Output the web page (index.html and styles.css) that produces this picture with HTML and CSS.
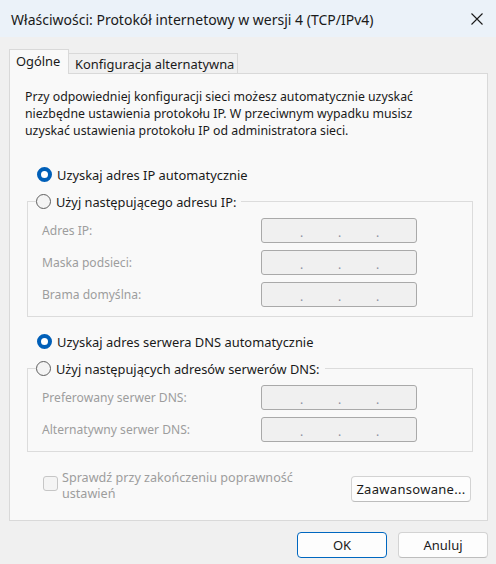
FILE: index.html
```html
<!DOCTYPE html>
<html lang="pl">
<head>
<meta charset="utf-8">
<title>Właściwości: Protokół internetowy w wersji 4 (TCP/IPv4)</title>
<link rel="stylesheet" href="styles.css">
</head>
<body>
<div class="window">
  <div class="titlebar">
    <span class="title">Właściwości: Protokół internetowy w wersji 4 (TCP/IPv4)</span>
    <svg class="close" width="12" height="12" viewBox="0 0 12 12"><path d="M0.5 0.5L11.5 11.5M11.5 0.5L0.5 11.5" stroke="#1a1a1a" stroke-width="1.1" fill="none"/></svg>
  </div>
  <div class="content">
    <div class="tabs">
      <div class="tab active">Ogólne</div>
      <div class="tab">Konfiguracja alternatywna</div>
    </div>
    <div class="panel">
      <p class="intro">Przy odpowiedniej konfiguracji sieci możesz automatycznie uzyskać<br>niezbędne ustawienia protokołu IP. W przeciwnym wypadku musisz<br>uzyskać ustawienia protokołu IP od administratora sieci.</p>

      <div class="radio-row first"><span class="radio checked"></span><span>Uzyskaj adres IP automatycznie</span></div>
      <fieldset class="group">
        <legend><span class="radio"></span><span>Użyj następującego adresu IP:</span></legend>
        <div class="field"><span class="flabel">Adres IP:</span><div class="ip"><span></span><i>.</i><span></span><i>.</i><span></span><i>.</i><span></span></div></div>
        <div class="field"><span class="flabel">Maska podsieci:</span><div class="ip"><span></span><i>.</i><span></span><i>.</i><span></span><i>.</i><span></span></div></div>
        <div class="field"><span class="flabel">Brama domyślna:</span><div class="ip"><span></span><i>.</i><span></span><i>.</i><span></span><i>.</i><span></span></div></div>
      </fieldset>

      <div class="radio-row second"><span class="radio checked"></span><span>Uzyskaj adres serwera DNS automatycznie</span></div>
      <fieldset class="group">
        <legend><span class="radio"></span><span>Użyj następujących adresów serwerów DNS:</span></legend>
        <div class="field"><span class="flabel">Preferowany serwer DNS:</span><div class="ip"><span></span><i>.</i><span></span><i>.</i><span></span><i>.</i><span></span></div></div>
        <div class="field"><span class="flabel">Alternatywny serwer DNS:</span><div class="ip"><span></span><i>.</i><span></span><i>.</i><span></span><i>.</i><span></span></div></div>
      </fieldset>

      <div class="bottom-row">
        <div class="check"><span class="box"></span><span class="check-label">Sprawdź przy zakończeniu poprawność<br>ustawień</span></div>
        <button class="btn adv">Zaawansowane...</button>
      </div>
    </div>
    <div class="footer">
      <button class="btn primary">OK</button>
      <button class="btn">Anuluj</button>
    </div>
  </div>
</div>
</body>
</html>
```
FILE: styles.css
```css
html, body {
  margin: 0;
  padding: 0;
}
body {
  font-family: "Noto Sans", "Open Sans", sans-serif;
  font-size: 12px;
  color: #1a1a1a;
  background: #f0f0f0;
}
.window {
  width: 496px;
  height: 564px;
  background: #f0f0f0;
  display: flex;
  flex-direction: column;
  overflow: hidden;
}
.titlebar {
  height: 37px;
  flex: none;
  background: #ebf2f9;
  display: flex;
  align-items: center;
  justify-content: space-between;
  padding: 0 13px 0 11px;
  box-sizing: border-box;
}
.title {
  font-size: 14px;
  line-height: 18px;
  padding-top: 2px;
}
.close {
  display: block;
}
.content {
  padding: 12px 8px 0 9px;
  display: flex;
  flex-direction: column;
}
.tabs {
  display: flex;
  align-items: flex-end;
  height: 24px;
  font-size: 12.9px;
}
.tab {
  height: 20px;
  line-height: 20px;
  padding: 0 6px 0 6px;
  border: 1px solid #d9d9d9;
  border-bottom: none;
  border-left: none;
  background: #f0f0f0;
  box-sizing: border-box;
  width: 169px;
  white-space: nowrap;
}
.tab.active {
  position: relative;
  z-index: 1;
  width: 60px;
  line-height: 22px;
  border-left: 1px solid #d9d9d9;
  background: #f9f9f9;
  margin-bottom: -1px;
  height: 25px;
}
.panel {
  height: 448px;
  box-sizing: border-box;
  border: 1px solid #d9d9d9;
  background: #f9f9f9;
  display: flex;
  flex-direction: column;
}
.intro {
  margin: 14px 0 0 15px;
  line-height: 17px;
  font-size: 12.3px;
  white-space: nowrap;
}
.radio-row {
  display: flex;
  align-items: center;
  height: 17px;
  margin-left: 27px;
  font-size: 12.9px;
}
.radio-row.first {
  margin-top: 27px;
}
.radio-row.second {
  margin-top: 16px;
}
.radio {
  width: 15px;
  height: 15px;
  box-sizing: border-box;
  border-radius: 50%;
  border: 1px solid #5f5f5f;
  background: #f4f4f4;
  margin-right: 5px;
  flex: none;
}
.radio.checked {
  border: 4.5px solid #005fb8;
  background: #ffffff;
}
.group {
  margin: 10px 14px 0 17px;
  padding: 8px 0 9px 14px;
  border: 1px solid #dcdcdc;
  display: flex;
  flex-direction: column;
  gap: 7px;
}
.group legend {
  display: flex;
  align-items: center;
  height: 17px;
  margin-left: -6px;
  padding: 0 5px 0 0;
  font-size: 12.8px;
  white-space: nowrap;
}
.field {
  display: flex;
  align-items: center;
  height: 25px;
}
.flabel {
  width: 219px;
  color: #9d9d9d;
  font-size: 12.1px;
}
.ip {
  width: 156px;
  height: 25px;
  box-sizing: border-box;
  border: 1px solid #a9a9a9;
  border-radius: 3px;
  background: #f0f0f0;
  display: flex;
  padding: 0 2px 0 3px;
  line-height: 27px;
  color: #8a8fa0;
}
.ip span {
  flex: 1;
}
.ip i {
  font-style: normal;
  width: 3px;
  text-align: center;
}
.bottom-row {
  display: flex;
  justify-content: space-between;
  align-items: flex-start;
  margin: 18px 16px 0 33px;
}
.check {
  display: flex;
  align-items: flex-start;
}
.box {
  width: 15px;
  height: 15px;
  box-sizing: border-box;
  border: 1px solid #c6c6c6;
  border-radius: 3px;
  background: #f4f4f4;
  margin: 6px 4px 0 0;
  flex: none;
}
.check-label {
  color: #9d9d9d;
  line-height: 16px;
  font-size: 12.6px;
  white-space: nowrap;
}
.btn {
  font-family: "Noto Sans", "Open Sans", sans-serif;
  font-size: 13px;
  color: #1a1a1a;
  background: #fdfdfd;
  border: 1px solid #d3d3d3;
  border-bottom-color: #bdbdbd;
  border-radius: 4px;
  height: 26px;
  padding: 0;
}
.adv {
  width: 120px;
  margin-top: 6px;
  letter-spacing: 0.3px;
}
.footer {
  display: flex;
  justify-content: flex-end;
  gap: 11px;
  margin-top: 11px;
}
.footer .btn {
  width: 90px;
}
.btn.primary {
  border-color: #0067c0;
}
```
